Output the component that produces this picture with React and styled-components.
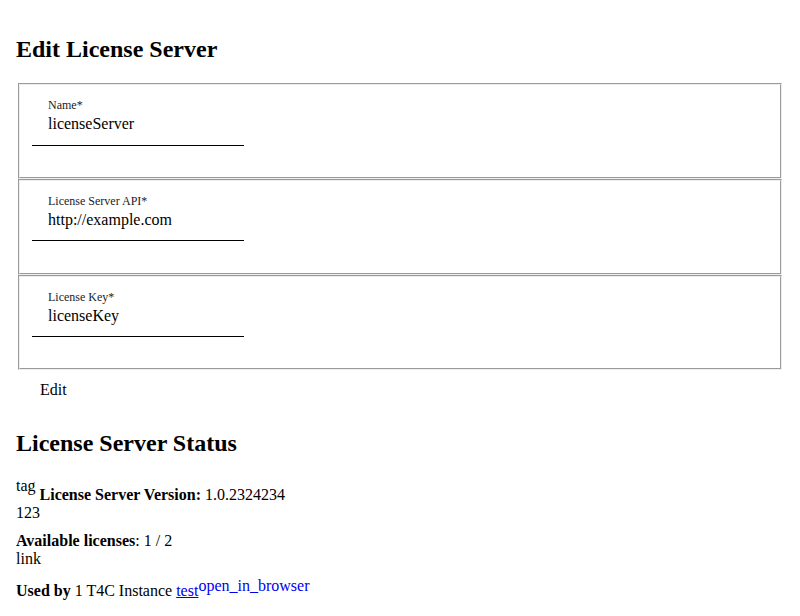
import styled, { createGlobalStyle } from "styled-components";

const GlobalStyle = createGlobalStyle`
  body {
    margin: 8px;
    background: #ffffff;
    color: #000000;
    font-family: "Liberation Serif", "Times New Roman", serif;
    font-size: 16px;
  }
`;

const fields = [
  { label: "Name*", value: "licenseServer" },
  { label: "License Server API*", value: "http://example.com" },
  { label: "License Key*", value: "licenseKey" },
];

export default function App() {
  return (
    <Page>
      <GlobalStyle />
      <Heading>Edit License Server</Heading>
      <form>
        {fields.map((f) => (
          <Fieldset key={f.label}>
            <Field>
              <Label>{f.label}</Label>
              <Value>{f.value}</Value>
            </Field>
          </Fieldset>
        ))}
        <Actions>
          <EditButton type="button">Edit</EditButton>
        </Actions>
      </form>

      <Heading>License Server Status</Heading>
      <Group>
        <div>
          <Icon $raise={9}>tag</Icon> <strong>License Server Version:</strong>{" "}
          1.0.2324234
        </div>
        <div>123</div>
      </Group>
      <Group>
        <div>
          <strong>Available licenses</strong>: 1 / 2
        </div>
        <div>link</div>
      </Group>
      <Group $tight>
        <strong>Used by</strong> 1 T4C Instance <Link href="#">test</Link>
        <Icon $raise={5} $link>
          open_in_browser
        </Icon>
      </Group>
    </Page>
  );
}

const Page = styled.div`
  padding: 8px 8px 0;
`;

const Heading = styled.h2`
  font-size: 24px;
  font-weight: bold;
  margin: 19.92px 0;
  line-height: normal;
`;

const Fieldset = styled.fieldset`
  margin: 0 2px;
  padding: 5.6px 12px 10px;
  border: 2px groove #eeeeee;
  min-width: 0;
`;

const Field = styled.div`
  width: 212px;
  padding-top: 8px;
  border-bottom: 1px solid #000000;
  margin-bottom: 21.1px;
`;

const Label = styled.div`
  font-size: 12px;
  padding-left: 16px;
  margin-bottom: 2px;
  color: #222222;
`;

const Value = styled.div`
  font-size: 16px;
  padding: 0 0 11.2px 16px;
`;

const Actions = styled.div`
  padding: 11px 24px 11px;
`;

const EditButton = styled.button`
  background: none;
  border: none;
  padding: 0;
  margin: 0;
  font-family: "Liberation Serif", "Times New Roman", serif;
  font-size: 16px;
  color: #000000;
`;

const Group = styled.div`
  margin-bottom: 10px;
  margin-top: ${(p) => (p.$tight ? "-1px" : "0")};
`;

const Icon = styled.span`
  vertical-align: ${(p) => p.$raise}px;
  color: ${(p) => (p.$link ? "#0000ee" : "inherit")};
`;

const Link = styled.a`
  color: #0000ee;
  text-decoration: underline;
`;
